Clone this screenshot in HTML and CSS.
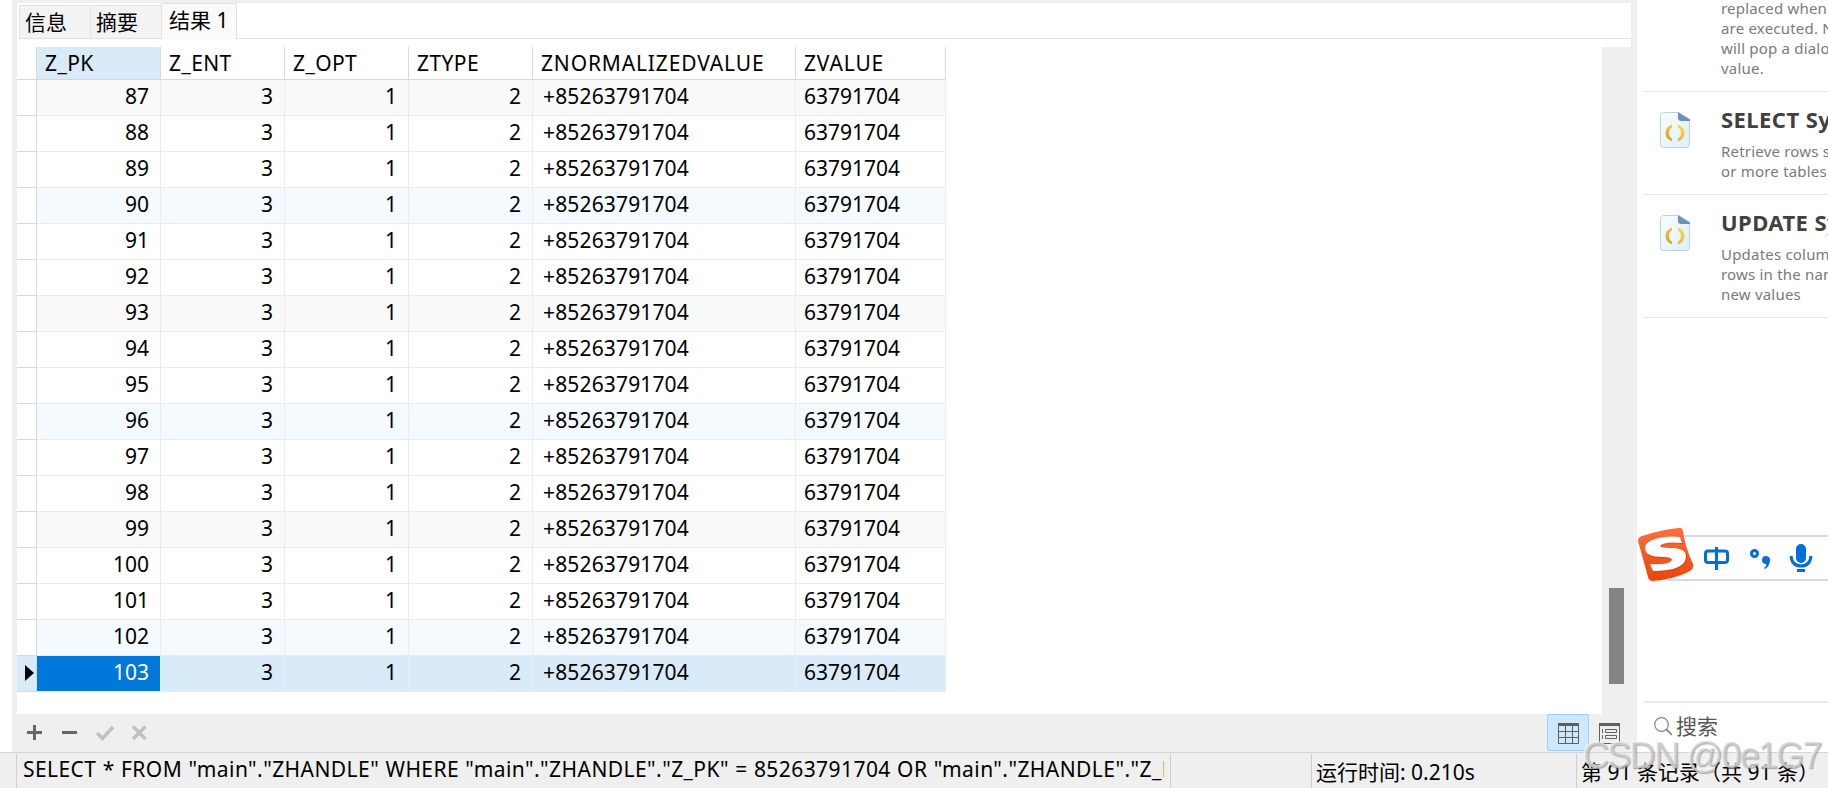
FILE: index.html
```html
<!DOCTYPE html>
<html lang="zh-CN">
<head>
    <meta charset="UTF-8">
    <meta name="viewport" content="width=device-width, initial-scale=1.0">
    <title>ZHANDLE</title>
    <link rel="stylesheet" href="styles.css">
</head>
<body>
    <div class="workspace">
        <main class="results">
            <nav class="tabs">
                <div class="tab">信息</div>
                <div class="tab">摘要</div>
                <div class="tab active">结果 1</div>
                <div class="tab-fill"></div>
            </nav>
            <div class="grid-area">
                <div class="grid-scroll">
                    <table>
                        <colgroup>
                            <col class="col-mark"><col class="col-num"><col class="col-num"><col class="col-num">
                            <col class="col-num"><col class="col-norm"><col class="col-value">
                        </colgroup>
                        <thead>
                            <tr>
                                <th></th>
                                <th class="sorted">Z_PK</th>
                                <th>Z_ENT</th>
                                <th>Z_OPT</th>
                                <th>ZTYPE</th>
                                <th class="wide">ZNORMALIZEDVALUE</th>
                                <th class="wide">ZVALUE</th>
                            </tr>
                        </thead>
                        <tbody id="rows"></tbody>
                    </table>
                </div>
                <div class="scrollbar"><div class="thumb"></div></div>
            </div>
            <div class="toolbar">
                <svg class="edit-icons" width="130" height="38" viewBox="0 0 130 38">
                    <path d="M10 18.5h15M17.500 11v15M45 18.500h15" stroke="#666" stroke-width="3" fill="none"/>
                    <path d="M80 19l5.500 5.500L96 13M116 12.500l12.500 12.500M128.500 12.500L116 25" stroke="#c0c0c0" stroke-width="3.400" fill="none"/>
                </svg>
                <div class="views">
                    <div class="view selected">
                        <svg width="21" height="21" viewBox="0 0 21 21">
                            <path d="M.5 0v20.500h20V0M0 8.500h21M0 14.500h21M7.500 3v17M14.500 3v17" stroke="#5c5f62" fill="none"/>
                            <path d="M0 0h21v3H0z" fill="#5c5f62"/>
                        </svg>
                    </div>
                    <div class="view form-view">
                        <svg width="21" height="21" viewBox="0 0 21 21">
                            <path d="M.5 0v20.500h20V0M3.500 6v4M3.500 12v4M6.500 6.500h11v3h-11zM6.500 12.500h11v3h-11z" stroke="#606060" fill="none"/>
                            <path d="M0 0h21v3H0z" fill="#606060"/>
                        </svg>
                    </div>
                </div>
            </div>
        </main>

        <aside class="snippets">
            <section class="snippet first">
                <div class="snippet-text">
                    <p>replaced when they<br>are executed. Navicat<br>will pop a dialog for<br>value.</p>
                </div>
            </section>
            <section class="snippet select">
                <svg class="doc-icon" width="30" height="36" viewBox="0 0 30 36"><use href="#doc"/></svg>
                <div class="snippet-text">
                    <h3>SELECT Syntax</h3>
                    <p>Retrieve rows selected<br>or more tables</p>
                </div>
            </section>
            <section class="snippet update">
                <svg class="doc-icon" width="30" height="36" viewBox="0 0 30 36"><use href="#doc"/></svg>
                <div class="snippet-text">
                    <h3>UPDATE Syntax</h3>
                    <p>Updates columns of<br>rows in the named<br>new values</p>
                </div>
            </section>
            <div class="search">
                <svg width="20" height="20" viewBox="0 0 20 20" fill="none" stroke="#858585">
                    <circle cx="7.500" cy="7.500" r="6.800" stroke-width="1.200"/>
                    <path d="M12.300 12.300l5.500 5.500" stroke-width="1.800"/>
                </svg>
                <span>搜索</span>
            </div>
        </aside>
    </div>

    <footer class="status">
        <div class="status-cell edge"></div>
        <div class="status-cell query"><span>SELECT * FROM "main"."ZHANDLE" WHERE "main"."ZHANDLE"."Z_PK" = 85263791704 OR "main"."ZHANDLE"."Z_PK"</span></div>
        <div class="status-cell blank"></div>
        <div class="status-cell time"><span>运行时间: 0.210s</span></div>
        <div class="status-cell record"><span>第 91 条记录（共 91 条）</span></div>
    </footer>

    <!-- input method bar floating over the window -->
    <div class="ime">
        <svg width="190" height="56" viewBox="0 0 190 56">
            <defs>
                <linearGradient id="orange" x1="0" y1="0" x2="0" y2="1">
                    <stop offset="0" stop-color="#fa7040"/>
                    <stop offset="1" stop-color="#ee4409"/>
                </linearGradient>
            </defs>
            <path d="M30 9h160M30 53h160" stroke="#c0cfe3" stroke-width="1.600"/>
            <path d="M4 9Q22 3 40 1Q44 0 45 4Q47 20 55 37Q56 41 52 44Q37 52 15 54Q11 54 10 50L0 14Q0 10 4 9z" fill="url(#orange)"/>
            <path d="M43 11Q36 10 28 11Q8 13 8 22Q8 31 25 31Q35 31 35 35Q33 40 13 39L15 45Q48 45 49 30Q49 23 37 22Q24 22 24 19Q28 15 45 17z" fill="#c92f00" opacity=".5"/>
            <path d="M42 10Q33 9 26 10Q7 13 7 21Q7 30 25 30Q34 30 34 33Q32 38 12 37L15 44Q48 44 48 29Q48 22 36 21Q23 21 22 19Q26 14 44 16z" fill="#fff"/>
            <g stroke="#006fdc" fill="none" stroke-width="3">
                <rect x="67.500" y="24" width="22" height="11.500" rx="2.500"/>
                <path d="M78.500 20v23"/>
                <circle cx="116.500" cy="26.500" r="3"/>
                <path d="M153 29Q154 39 163 39Q172 39 173 29M159 43.500h8"/>
            </g>
            <path d="M128 29a4 4 0 0 1 4 5q-1 6-5 8l-1-1q3-2 2-4a4 4 0 0 1 0-8zM158 22a5 5 0 0 1 10 0v9a5 5 0 0 1-10 0z" fill="#006fdc"/>
        </svg>
    </div>
    <div class="watermark">CSDN @0e1G7</div>

    <svg class="symbols" width="0" height="0">
        <defs>
            <linearGradient id="paper" x1="0" y1="0" x2="1" y2="1">
                <stop offset="0" stop-color="#fafdff"/>
                <stop offset="1" stop-color="#ddeefb"/>
            </linearGradient>
            <linearGradient id="gold" x1="1" y1="0" x2="0" y2="1">
                <stop offset="0" stop-color="#ffdf45"/>
                <stop offset="1" stop-color="#d99c32"/>
            </linearGradient>
            <symbol id="doc" viewBox="0 0 30 36">
                <path d="M3.500.5H18L29.500 8v24.500q0 3-3 3h-23q-3 0-3-3v-29q0-3 3-3z" fill="url(#paper)" stroke="#bcd3e6"/>
                <path d="M18 0l12 7.500V9h-9q-3 0-3-3z" fill="#6893ba"/>
                <path d="M12 12.500Q5.500 15 5.500 21T12 29.500V26.500Q9 25 9 21T12 15.500zM18 12.500Q24.500 15 24.500 21T18 29.500V26.500Q21 25 21 21T18 15.500z" fill="url(#gold)"/>
            </symbol>
        </defs>
    </svg>

    <script src="script.js"></script>
</body>
</html>
```
FILE: styles.css
```css
* {
    box-sizing: border-box;
}
body {
    margin: 0;
    width: 1828px;
    height: 788px;
    overflow: hidden;
    font-family: "Noto Sans", "Noto Sans CJK SC", sans-serif;
    font-size: 21px;
    color: #000;
    background: #efefef;
}
.workspace {
    display: flex;
    height: 752px;
}
.results {
    width: 1637px;
    display: flex;
    flex-direction: column;
    border-left: 12px solid #fff;
    padding: 3px 0 0 5px;
}

/* Tabs */
.tabs {
    display: flex;
    align-items: flex-end;
    height: 44px;
    width: 1614px;
    padding: 0 0 8px 2px;
    background: #fff;
}
.tab {
    width: 71px;
    height: 34px;
    padding-left: 5px;
    line-height: 32px;
    white-space: nowrap;
    background: #f3f3f3;
    border: 1px solid #e2e2e2;
    border-right: 0;
}
.tab.active {
    width: 76px;
    height: 36px;
    padding-left: 7px;
    line-height: 33px;
    background: #fafafa;
    border-right: 1px solid #e2e2e2;
    border-bottom: 0;
}
.tab-fill {
    flex: 1;
    border-bottom: 1px solid #e2e2e2;
}

/* Data grid */
.grid-area {
    display: flex;
    height: 667px;
}
.grid-scroll {
    width: 1585px;
    background: #fff;
}
table {
    table-layout: fixed;
    width: 929px;
    border-collapse: separate;
    border-spacing: 0;
}
.col-mark { width: 20px; }
.col-num { width: 124px; }
.col-norm { width: 263px; }
.col-value { width: 150px; }
th, td {
    padding: 0;
    white-space: nowrap;
    line-height: 28px;
}
th {
    height: 33px;
    padding-left: 8px;
    font-weight: normal;
    text-align: left;
    letter-spacing: 0.4px;
    border-right: 1px solid #d9d9d9;
    border-bottom: 1px solid #d9d9d9;
}
th.wide {
    letter-spacing: 0.85px;
}
th.sorted {
    background: #d9eaf8;
}
td {
    height: 36px;
    padding: 0 11px 4px 0;
    text-align: right;
    border-right: 1px solid #ececec;
    border-bottom: 1px solid #ececec;
}
td.text {
    padding-left: 8px;
    text-align: left;
}
td.norm {
    padding-left: 10px;
    letter-spacing: 0.15px;
}
td.mark {
    padding: 0 2px 2px 0;
    line-height: 0;
    background: #fff;
    border-color: #d9d9d9;
}
.shade td { background: #f9f9f9; }
.tint td { background: #f4faff; }
.current td { background: #d9eaf9; }
.shade td.mark, .tint td.mark { background: #fff; }
.current td.mark { background: #d9eaf9; }
.current td.pk {
    color: #fff;
    background: #0078d9;
}
.scrollbar {
    width: 35px;
    padding: 541px 0 0 7px;
}
.thumb {
    width: 15px;
    height: 96px;
    background: #858585;
}

/* Toolbar under the grid */
.toolbar {
    display: flex;
    justify-content: space-between;
    height: 38px;
    padding-right: 6px;
}
.views {
    display: flex;
}
.view {
    display: flex;
    align-items: center;
    justify-content: center;
    width: 42px;
    height: 37px;
    padding-top: 2px;
}
.view.selected {
    background: #cde8ff;
    border: 1px solid #99d1ff;
    border-radius: 2px;
}
.form-view {
    padding-right: 2px;
}

/* Snippet panel */
.snippets {
    width: 191px;
    padding-left: 7px;
    background: #fff;
    overflow: hidden;
    display: flex;
    flex-direction: column;
}
.snippet {
    display: flex;
    flex-shrink: 0;
    padding: 20px 0 0 16px;
    border-bottom: 1px solid #e6e6e6;
}
.snippet.first {
    height: 92px;
    padding: 0 0 0 77px;
}
.snippet.select { height: 103px; }
.snippet.update { height: 123px; }
.doc-icon {
    flex-shrink: 0;
    margin-right: 31px;
}
.snippet-text {
    white-space: nowrap;
}
.snippet h3 {
    margin: -8px 0 7px;
    font-size: 22px;
    line-height: 30px;
    letter-spacing: 0.45px;
    color: #404040;
}
.snippet p {
    margin: 0;
    font-size: 15px;
    line-height: 20px;
    letter-spacing: 0.2px;
    color: #7a7a7a;
}
.snippet.first p {
    margin-top: -2px;
}
.search {
    display: flex;
    height: 51px;
    margin-top: auto;
    padding: 14px 0 0 10px;
    gap: 2px;
    line-height: 24px;
    font-size: 21px;
    color: #555;
    border-top: 2px solid #e9e9e9;
}
.search span {
    margin-top: -3px;
}

/* Status bar */
.status {
    display: flex;
    height: 36px;
    padding-top: 1px;
    border-top: 1px solid #d4d4d4;
}
.status-cell {
    flex-shrink: 0;
    padding-left: 6px;
    line-height: 30px;
    white-space: nowrap;
    overflow: hidden;
    border-right: 1px solid #d0d0d0;
}
.edge { width: 17px; }
.query {
    width: 1154px;
    letter-spacing: 0.43px;
    word-spacing: 0.4px;
}
.query span {
    display: block;
    width: 1141px;
    overflow: hidden;
}
.blank { width: 141px; }
.time {
    width: 265px;
    padding-left: 4px;
    line-height: 36px;
}
.record {
    width: 251px;
    padding-left: 4px;
    line-height: 36px;
    border-right: 0;
}

.ime {
    position: absolute;
    left: 1638px;
    top: 527px;
    width: 190px;
    height: 56px;
    background: linear-gradient(#fff, #fff) 30px 9px / 160px 44px no-repeat;
}
.ime svg {
    display: block;
}
.watermark {
    position: absolute;
    left: 1583px;
    top: 735px;
    font-family: "Liberation Sans", Arial, sans-serif;
    font-size: 36px;
    line-height: 41px;
    letter-spacing: -1.7px;
    white-space: nowrap;
    color: rgba(215, 215, 215, 0.7);
    text-shadow: 1px 1px 1px rgba(120, 120, 120, 0.6), -1px -1px 0 rgba(255, 255, 255, 0.6);
}
.symbols {
    position: absolute;
}
```
FILE: script.js
```js
const body = document.getElementById('rows');
const arrow = '<svg width="9" height="16" viewBox="0 0 9 16"><path d="M0 0l9 8-9 8z"/></svg>';

for (let pk = 87; pk <= 103; pk++) {
    const row = document.createElement('tr');
    // every third row is shaded, alternating grey and blue
    if (pk % 6 === 3) row.className = 'shade';
    if (pk % 6 === 0) row.className = 'tint';
    if (pk === 103) row.className = 'current';

    row.innerHTML = `<td class="mark">${pk === 103 ? arrow : ''}</td>
        <td class="pk">${pk}</td><td>3</td><td>1</td><td>2</td>
        <td class="text norm">+85263791704</td><td class="text">63791704</td>`;
    body.appendChild(row);
}
```
